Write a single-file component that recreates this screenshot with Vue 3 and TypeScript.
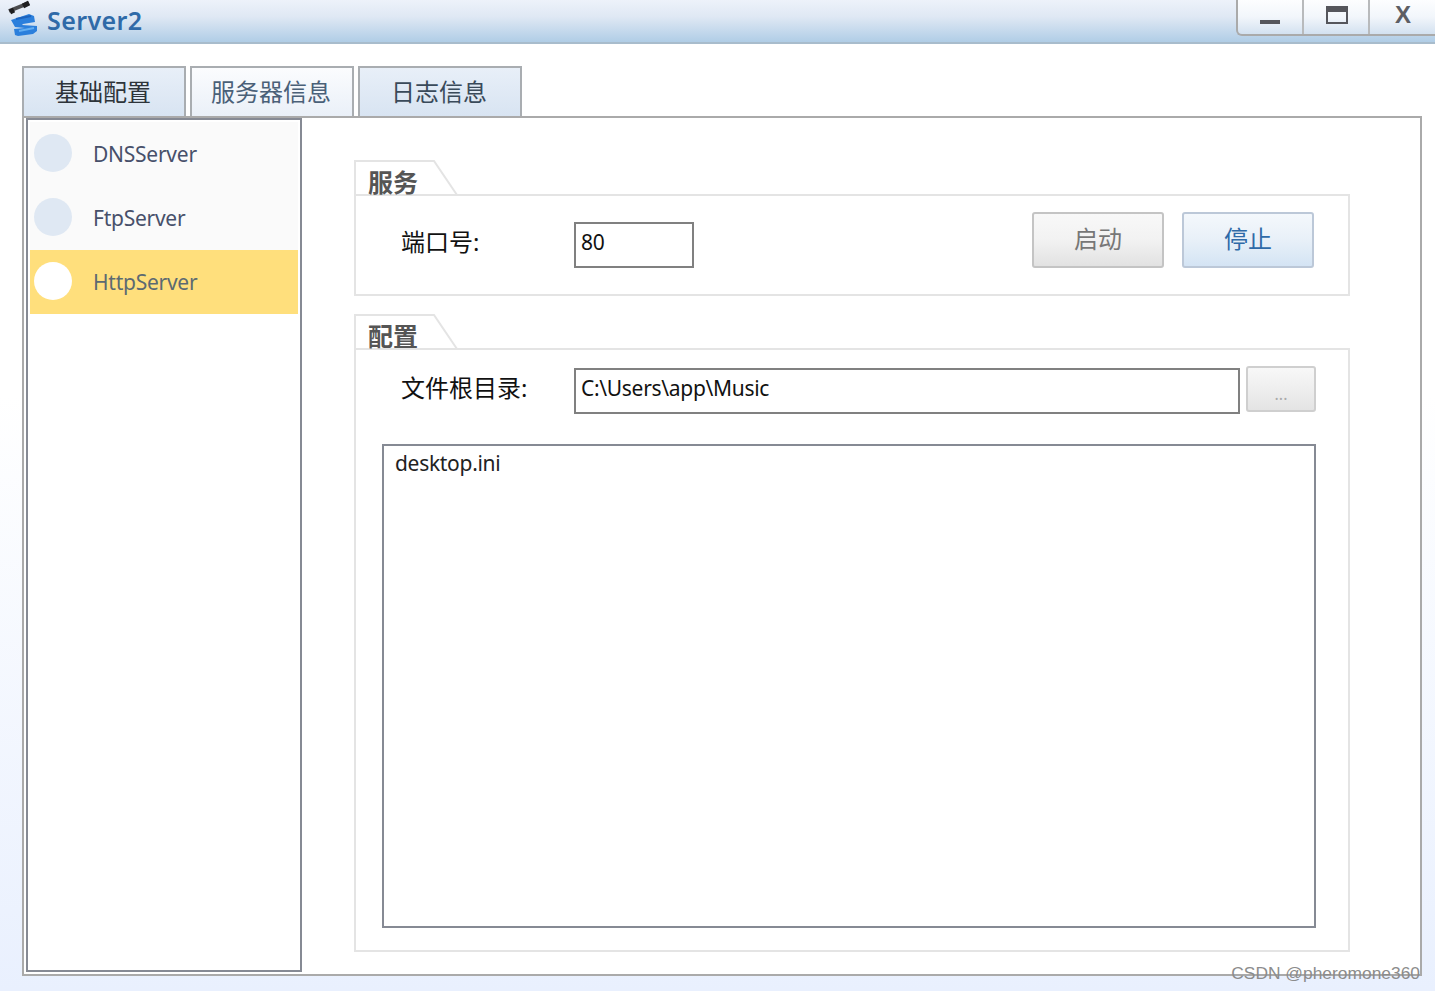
<script setup lang="ts">
const servers = [
  { name: 'DNSServer', active: false },
  { name: 'FtpServer', active: false },
  { name: 'HttpServer', active: true },
]
const tabs = [
  { name: '基础配置', kind: 'first' },
  { name: '服务器信息', kind: 'second' },
  { name: '日志信息', kind: 'third' },
]
</script>

<template>
  <div class="window">
    <header class="titlebar">
      <svg class="logo" width="40" height="38" viewBox="0 0 40 38">
        <path d="M8 11 L28 3" stroke="#4c4c4e" stroke-width="4" fill="none" />
        <path d="M9 12 L13 10 M22 6 L28 3" stroke="#1e1e20" stroke-width="5" fill="none" />
        <path d="M10 20 L28 14 L33 16 L34 22 L22 24 L21 25 L36 26 L36 31 L32 34 L17 36 L14 35 L13 29 L24 28 L14 27 Z" fill="#2b7fdc" />
        <path d="M18 31 L33 28" stroke="#63aef2" stroke-width="2" fill="none" />
        <path d="M15 19 L30 16" stroke="#1b62bd" stroke-width="2" fill="none" />
      </svg>
      <span class="title">Server2</span>
      <div class="controls">
        <div class="ctl"><i class="min"></i></div>
        <div class="ctl"><i class="max"></i></div>
        <div class="ctl close">X</div>
      </div>
    </header>

    <main class="content">
      <nav class="tabs">
        <div v-for="t in tabs" :key="t.name" class="tab" :class="t.kind">{{ t.name }}</div>
      </nav>
      <section class="panel">
        <aside class="sidebar">
          <div v-for="s in servers" :key="s.name" class="item" :class="{ active: s.active }">
            <span class="dot"></span>
            <span class="item-name">{{ s.name }}</span>
          </div>
        </aside>
        <div class="main">
          <div class="group">
            <div class="group-head">
              <svg class="notch" width="106" height="36" viewBox="0 0 106 36">
                <path d="M1 36 V1 H80 L103 35" fill="none" stroke="#e4e4e4" stroke-width="2" />
              </svg>
              <span class="group-title">服务</span>
            </div>
            <div class="group-body service">
              <span class="label">端口号:</span>
              <input class="field port" value="80" readonly />
              <button class="btn gray">启动</button>
              <button class="btn blue">停止</button>
            </div>
          </div>
          <div class="group">
            <div class="group-head">
              <svg class="notch" width="106" height="36" viewBox="0 0 106 36">
                <path d="M1 36 V1 H80 L103 35" fill="none" stroke="#e4e4e4" stroke-width="2" />
              </svg>
              <span class="group-title">配置</span>
            </div>
            <div class="group-body config">
              <div class="path-row">
                <span class="label">文件根目录:</span>
                <input class="field path" value="C:\Users\app\Music" readonly />
                <button class="browse">...</button>
              </div>
              <ul class="files">
                <li>desktop.ini</li>
              </ul>
            </div>
          </div>
        </div>
      </section>
    </main>
    <span class="watermark">CSDN @pheromone360</span>
  </div>
</template>

<style scoped>
.window {
  position: relative;
  width: 1435px;
  height: 991px;
  overflow: hidden;
  background: linear-gradient(180deg, #ffffff 0%, #ffffff 40%, #e9f0fe 100%);
  font-family: "Noto Sans", "Noto Sans CJK SC", sans-serif;
  color: #111;
}
.titlebar {
  height: 42px;
  display: flex;
  align-items: center;
  background: linear-gradient(180deg, #edf2fa 0%, #dfe8f4 40%, #b0cde6 100%);
  border-bottom: 2px solid #a8bccc;
}
.logo {
  flex: none;
  margin-left: 1px;
  margin-top: -4px;
}
.title {
  margin-left: 6px;
  font-family: "Noto Sans", sans-serif;
  font-size: 25px;
  font-weight: 600;
  letter-spacing: 0.4px;
  color: #2f6aa8;
  line-height: 40px;
  margin-bottom: 2px;
}
.controls {
  margin-left: auto;
  align-self: flex-start;
  width: 199px;
  height: 36px;
  display: flex;
  box-sizing: border-box;
  border: 2px solid #aaaaaa;
  border-top: 0;
  border-right: 0;
  border-radius: 0 0 0 6px;
  background: linear-gradient(180deg, #fdfeff 0%, #f2f6fb 50%, #d3e1f0 100%);
}
.ctl {
  flex: none;
  width: 66px;
  box-sizing: border-box;
  position: relative;
  border-right: 2px solid #b8babc;
  display: flex;
  align-items: flex-start;
  justify-content: center;
}
.ctl:last-child {
  border-right: 0;
}
.min {
  position: absolute;
  left: 22px;
  top: 20px;
  width: 20px;
  height: 4px;
  background: #55565c;
}
.max {
  position: absolute;
  left: 22px;
  top: 6px;
  width: 22px;
  height: 18px;
  box-sizing: border-box;
  border: 2px solid #55565c;
  border-top-width: 6px;
}
.close {
  font-family: "Liberation Sans", sans-serif;
  font-size: 24px;
  font-weight: 700;
  line-height: 30px;
  color: #5d5e64;
}
.content {
  padding: 22px 13px 0 22px;
}
.tabs {
  display: flex;
  gap: 4px;
  height: 50px;
}
.tab {
  width: 164px;
  height: 50px;
  box-sizing: border-box;
  border: 2px solid #a9adb1;
  border-bottom: 0;
  padding-right: 2px;
  text-align: center;
  font-size: 24px;
  line-height: 48px;
}
.tab.first {
  background: linear-gradient(180deg, #e8eff8 0%, #d8e4f2 100%);
  color: #2e343a;
}
.tab.second {
  background: linear-gradient(180deg, #fbfcfe 0%, #eaf0f8 100%);
  color: #4a6078;
}
.tab.third {
  background: linear-gradient(180deg, #e8eff8 0%, #d8e4f2 100%);
  color: #3a4a5a;
}
.panel {
  display: flex;
  width: 1400px;
  height: 860px;
  box-sizing: border-box;
  border: 2px solid #aaaaaa;
  background: #fff;
}
.sidebar {
  width: 276px;
  height: 854px;
  margin-left: 2px;
  padding: 2px;
  flex: none;
  box-sizing: border-box;
  border: 2px solid #868a94;
  background: #fff;
}
.item {
  height: 64px;
  display: flex;
  align-items: center;
  background: #fafafa;
  color: #47506a;
}
.item.active {
  background: #ffdf7c;
  color: #5c6a72;
}
.dot {
  width: 38px;
  height: 38px;
  margin: -2px 0 0 4px;
  border-radius: 50%;
  background: #dfe8f3;
  flex: none;
}
.active .dot {
  background: #fff;
}
.item-name {
  margin-left: 21px;
  font-size: 21px;
  letter-spacing: -0.25px;
}
.main {
  flex: 1;
  padding: 42px 70px 0 52px;
  display: flex;
  flex-direction: column;
  gap: 18px;
}
.group-head {
  position: relative;
  height: 34px;
}
.notch {
  position: absolute;
  left: 0;
  top: 0;
}
.group-title {
  position: relative;
  margin-left: 14px;
  font-size: 25px;
  font-weight: 700;
  color: #555;
  line-height: 44px;
  display: block;
}
.group-body {
  border: 2px solid #e4e4e4;
  box-sizing: border-box;
}
.service {
  height: 102px;
  display: flex;
  align-items: flex-start;
  padding: 16px 34px 0 0;
}
.config {
  height: 604px;
  padding: 18px 32px 0 26px;
}
.label {
  width: 173px;
  margin-left: 45px;
  flex: none;
  font-size: 24px;
  color: #111;
  line-height: 28px;
}
.service .label {
  margin-top: 0;
  padding-top: 16px;
}
.field {
  box-sizing: border-box;
  height: 46px;
  border: 2px solid #808080;
  padding: 0 5px 6px;
  font-family: "Noto Sans", sans-serif;
  font-size: 21px;
  letter-spacing: -0.3px;
  color: #111;
  background: #fff;
  outline: none;
}
.port {
  width: 120px;
  margin-top: 10px;
}
.path-row {
  display: flex;
  align-items: flex-start;
  margin-left: -26px;
  gap: 0;
}
.path-row .label {
  padding-top: 6px;
}
.path {
  width: 666px;
}
.btn {
  width: 132px;
  height: 56px;
  box-sizing: border-box;
  padding: 0 0 4px;
  border-radius: 3px;
  font-family: "Noto Sans CJK SC", sans-serif;
  font-size: 24px;
  line-height: 1;
}
.btn.gray {
  margin-left: auto;
  border: 2px solid #c4c4c4;
  background: linear-gradient(180deg, #f8f8f8 0%, #f2f2f2 50%, #e2e2e2 100%);
  color: #777;
}
.btn.blue {
  margin-left: 18px;
  border: 2px solid #bcc8d8;
  background: linear-gradient(180deg, #f4f8fc 0%, #e8f0f8 50%, #d4e4f4 100%);
  color: #2f6aa8;
}
.browse {
  width: 70px;
  height: 46px;
  margin: -2px 0 0 6px;
  padding: 10px 0 0;
  box-sizing: border-box;
  border: 2px solid #cfcfcf;
  border-radius: 3px;
  background: linear-gradient(180deg, #f8f8f8 0%, #e4e4e4 100%);
  color: #aaa;
  font-family: "Noto Sans", sans-serif;
  font-size: 16px;
}
.files {
  list-style: none;
  width: 934px;
  height: 484px;
  margin: 30px 0 0;
  padding: 3px 11px;
  box-sizing: border-box;
  border: 2px solid #868a94;
  font-size: 21px;
  letter-spacing: -0.3px;
  color: #222;
}
.watermark {
  position: absolute;
  right: 15px;
  top: 963px;
  font-family: "Liberation Sans", sans-serif;
  font-size: 17.4px;
  color: #8c8c8c;
  line-height: 20px;
}
</style>
